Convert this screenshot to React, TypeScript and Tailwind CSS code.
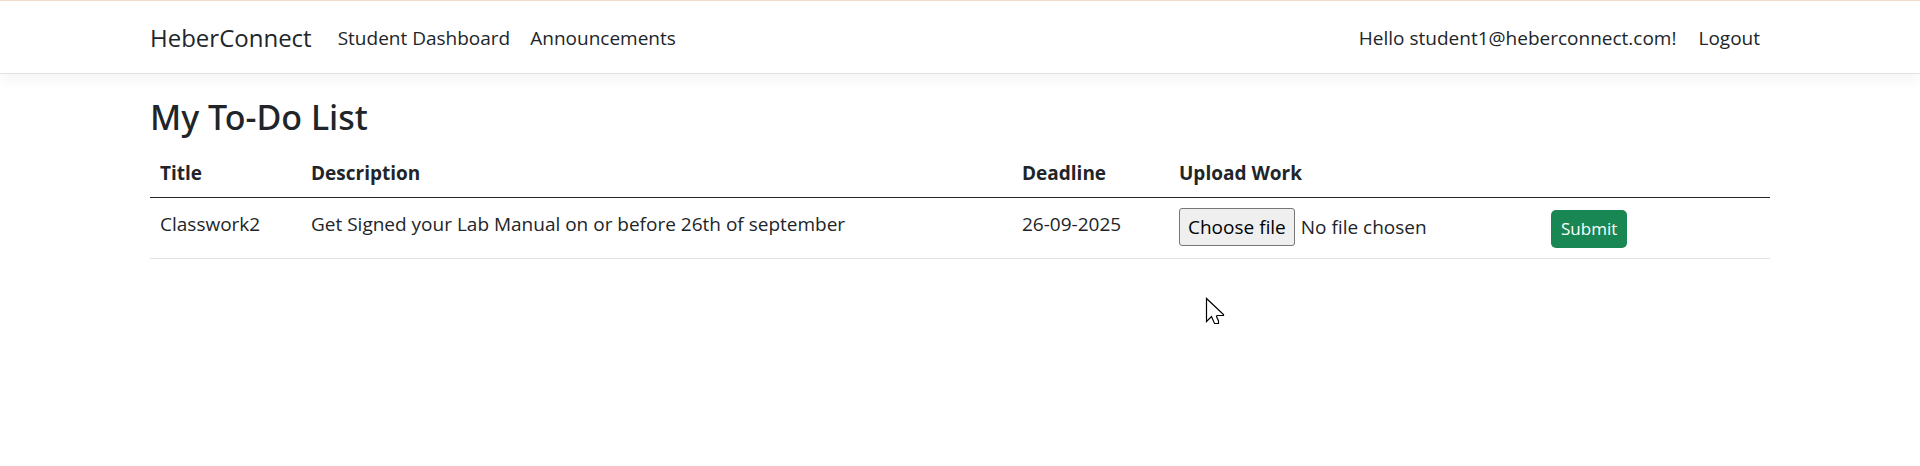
const navLink = "px-[10px] py-[10px] text-[19px] leading-[30px] text-[#212529]";

function Navbar() {
  return (
    <header className="border-t border-b border-t-[#f2dccb] border-b-[#dee2e6] bg-white shadow-[0_5px_15px_rgba(0,0,0,0.05)]">
      <nav className="mx-auto flex min-h-[72px] max-w-[1650px] items-center px-[15px] pt-[2px]">
        <a href="#home" className="mr-4 text-[24px] leading-[38px] text-[#212529]">
          HeberConnect
        </a>
        <ul className="flex grow">
          <li className="flex"><a href="#dashboard" className={navLink}>Student Dashboard</a></li>
          <li className="flex"><a href="#announcements" className={navLink}>Announcements</a></li>
        </ul>
        <span className="mr-3 text-[19px] leading-[30px]">Hello student1@heberconnect.com!</span>
        <a href="#logout" className={navLink}>Logout</a>
      </nav>
    </header>
  );
}

interface Task {
  title: string;
  description: string;
  deadline: string;
}

const tasks: Task[] = [
  {
    title: "Classwork2",
    description: "Get Signed your Lab Manual on or before 26th of september",
    deadline: "26-09-2025",
  },
];

function TaskRow({ task }: { task: Task }) {
  return (
    <tr className="border-b border-[#dee2e6] align-top">
      <td className="p-[10px] pt-[11px]">{task.title}</td>
      <td className="p-[10px] pt-[11px]">{task.description}</td>
      <td className="p-[10px] pt-[11px]">{task.deadline}</td>
      <td className="p-[10px]">
        <label className="flex items-center gap-[6px]">
          <input type="file" className="sr-only" />
          <span className="rounded-[3px] border border-[#767676] bg-[#efefef] px-2 py-[3px] text-black">
            Choose file
          </span>
          <span>No file chosen</span>
        </label>
      </td>
      <td className="px-[10px] pt-3 pb-[10px]">
        <button type="button" className="block rounded-[5px] bg-[#198754] px-[10px] py-1 text-[17px] leading-[30px] text-white">
          Submit
        </button>
      </td>
    </tr>
  );
}

export default function App() {
  return (
    <div className="min-h-screen bg-white font-['Segoe_UI','Open_Sans',sans-serif] text-[#212529]">
      <Navbar />
      <main className="mx-auto max-w-[1650px] px-[15px] pt-5">
        <h2 className="mb-2 font-['Segoe_UI','Noto_Sans',sans-serif] text-[34px] leading-[46px] font-medium">My To-Do List</h2>
        <table className="w-full table-fixed border-collapse text-left text-[19px] leading-[30px]">
          <thead>
            <tr className="border-b border-[#212529] font-bold">
              <th className="w-[151px] p-[10px] pb-[9px]">Title</th>
              <th className="p-[10px] pb-[9px]">Description</th>
              <th className="w-[157px] p-[10px] pb-[9px]">Deadline</th>
              <th className="w-[372px] p-[10px] pb-[9px]">Upload Work</th>
              <th className="w-[229px] p-[10px] pb-[9px]"></th>
            </tr>
          </thead>
          <tbody>
            {tasks.map((task) => (
              <TaskRow key={task.title} task={task} />
            ))}
          </tbody>
        </table>
      </main>
      <svg
        className="pointer-events-none absolute top-[297px] left-[1205px]"
        width="20"
        height="29"
        viewBox="0 0 20 29"
        aria-hidden="true"
      >
        <path
          d="M1.5 1.5V24.5L6.5 19.5L9.5 26.5H13.5V24L11.5 19.5L12 18.5H18.5V17.5Z"
          fill="#fff"
          stroke="#000"
          strokeWidth="1.2"
        />
      </svg>
    </div>
  );
}
